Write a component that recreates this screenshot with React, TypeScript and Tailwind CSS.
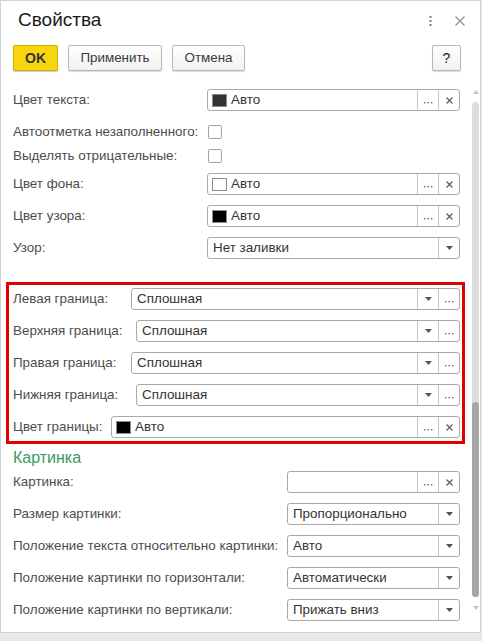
import React from "react";

const FONT = { fontFamily: '"Liberation Sans", Arial, sans-serif' };

function Dots() {
  return (
    <svg width="9" height="2" viewBox="0 0 9 2" className="block">
      <rect x="0" y="0" width="1.4" height="1.4" fill="#6b6b6b" />
      <rect x="3.5" y="0" width="1.4" height="1.4" fill="#6b6b6b" />
      <rect x="7" y="0" width="1.4" height="1.4" fill="#6b6b6b" />
    </svg>
  );
}

function Cross() {
  return (
    <svg width="7" height="7" viewBox="0 0 7 7" className="block">
      <path d="M0.5 0.5 L6.5 6.5 M6.5 0.5 L0.5 6.5" stroke="#555" strokeWidth="1.1" />
    </svg>
  );
}

function Tri() {
  return (
    <svg width="7" height="4" viewBox="0 0 7 4" className="block">
      <path d="M0 0 L7 0 L3.5 4 Z" fill="#555" />
    </svg>
  );
}

function DotsCell() {
  return (
    <div className="w-[21px] border-l border-[#c6c6c6] flex items-end justify-center pb-[6px]">
      <Dots />
    </div>
  );
}
function CrossCell() {
  return (
    <div className="w-[21px] border-l border-[#c6c6c6] flex items-center justify-center">
      <Cross />
    </div>
  );
}
function TriCell() {
  return (
    <div className="w-[21px] border-l border-[#c6c6c6] flex items-center justify-center">
      <Tri />
    </div>
  );
}

function Box({ children }: { children: React.ReactNode }) {
  return (
    <div className="flex-1 h-[22px] flex border border-[#a9a9a9] rounded-[3px] bg-white overflow-hidden">
      {children}
    </div>
  );
}

function ColorField({ swatch, text }: { swatch?: string; text?: string }) {
  return (
    <Box>
      <div className="flex-1 flex items-center pl-[4px] text-[13.4px] text-[#333]">
        {swatch && (
          <span
            className="w-[15px] h-[13px] border border-[#8c8c8c] mr-[4px] inline-block"
            style={{ background: swatch }}
          />
        )}
        {text}
      </div>
      <DotsCell />
      <CrossCell />
    </Box>
  );
}

function SelectField({ text, dots }: { text: string; dots?: boolean }) {
  return (
    <Box>
      <div className="flex-1 flex items-center pl-[5px] text-[13.4px] text-[#333]">{text}</div>
      <TriCell />
      {dots && <DotsCell />}
    </Box>
  );
}

function Row({ label, w, children, className = "" }: { label: string; w: number; children: React.ReactNode; className?: string }) {
  return (
    <div className={"flex items-center h-[22px] " + className}>
      <div className="text-[13.4px] text-[#4d4d4d] shrink-0 whitespace-nowrap" style={{ width: w }}>
        {label}
      </div>
      {children}
    </div>
  );
}

function CheckRow({ label, className = "" }: { label: string; className?: string }) {
  return (
    <div className={"flex items-center h-[24px] " + className}>
      <div className="w-[194px] text-[13.4px] text-[#4d4d4d] whitespace-nowrap">{label}</div>
      <div className="w-[14px] h-[14px] border border-[#a3a3a3] rounded-[2px] bg-white ml-[1px]" />
    </div>
  );
}

function Btn({ children, w, className = "" }: { children: React.ReactNode; w: number; className?: string }) {
  return (
    <div
      className={
        "h-[26px] flex items-center justify-center rounded-[2px] border border-[#b6b6b6] bg-gradient-to-b from-white to-[#f1f1f1] shadow-[0_1px_1px_rgba(0,0,0,0.15)] text-[13.4px] text-[#3a3a3a] " +
        className
      }
      style={{ width: w }}
    >
      {children}
    </div>
  );
}

export default function App() {
  return (
    <div className="w-[482px] h-[641px] bg-[#e8e8e8] overflow-hidden" style={FONT}>
      <div className="w-[481px] h-[633px] bg-white border border-[#d2d2d2] flex flex-col">
        {/* header */}
        <div className="flex items-start pt-[8px] pl-[17px] pr-[15px]">
          <div className="text-[19px] leading-[22px] text-[#1a1a1a]">Свойства</div>
          <div className="ml-auto flex items-center mt-[7px]">
            <svg width="3" height="10" viewBox="0 0 3 10" className="block mr-[23px]">
              <rect x="0.5" y="0" width="2" height="2" fill="#7d7d7d" />
              <rect x="0.5" y="4" width="2" height="2" fill="#7d7d7d" />
              <rect x="0.5" y="8" width="2" height="2" fill="#7d7d7d" />
            </svg>
            <svg width="10" height="10" viewBox="0 0 10 10" className="block">
              <path d="M0.5 0.5 L9.5 9.5 M9.5 0.5 L0.5 9.5" stroke="#8a8a8a" strokeWidth="1.1" />
            </svg>
          </div>
        </div>
        {/* buttons */}
        <div className="flex items-center mt-[14px] pl-[12px] pr-[19px]">
          <div className="w-[45px] h-[26px] flex items-center justify-center rounded-[2px] border border-[#d1ad00] bg-[#f8d60f] shadow-[0_1px_1px_rgba(0,0,0,0.2)] text-[14px] font-bold text-[#333]">
            OK
          </div>
          <Btn w={94} className="ml-[10px]">Применить</Btn>
          <Btn w={73} className="ml-[10px]">Отмена</Btn>
          <Btn w={29} className="ml-auto text-[14px] text-[#222]">?</Btn>
        </div>
        {/* content */}
        <div className="flex flex-1">
          <div className="w-[465px] flex flex-col">
            <div className="ml-[12px] w-[447px] flex flex-col mt-[18px]">
              <Row label="Цвет текста:" w={194}>
                <ColorField swatch="#333333" text="Авто" />
              </Row>
              <CheckRow label="Автоотметка незаполненного:" className="mt-[9px]" />
              <CheckRow label="Выделять отрицательные:" />
              <Row label="Цвет фона:" w={194} className="mt-[5px]">
                <ColorField swatch="#ffffff" text="Авто" />
              </Row>
              <Row label="Цвет узора:" w={194} className="mt-[10px]">
                <ColorField swatch="#000000" text="Авто" />
              </Row>
              <Row label="Узор:" w={194} className="mt-[10px]">
                <SelectField text="Нет заливки" />
              </Row>
            </div>
            <div className="ml-[5px] w-[459px] mt-[23px] border-[3px] border-[#e00000] pt-[3px] pb-[3px] flex flex-col gap-[10px]">
              <div className="ml-[4px] w-[447px] flex flex-col gap-[10px]">
                <Row label="Левая граница:" w={118}>
                  <SelectField text="Сплошная" dots />
                </Row>
                <Row label="Верхняя граница:" w={123}>
                  <SelectField text="Сплошная" dots />
                </Row>
                <Row label="Правая граница:" w={118}>
                  <SelectField text="Сплошная" dots />
                </Row>
                <Row label="Нижняя граница:" w={123}>
                  <SelectField text="Сплошная" dots />
                </Row>
                <Row label="Цвет границы:" w={98}>
                  <ColorField swatch="#000000" text="Авто" />
                </Row>
              </div>
            </div>
            <div className="ml-[12px] w-[447px] flex flex-col">
              <div className="mt-[5px] text-[16px] leading-[18px] text-[#3a9a5e]">Картинка</div>
              <div className="flex flex-col gap-[10px] mt-[4px]">
                <Row label="Картинка:" w={274}>
                  <ColorField />
                </Row>
                <Row label="Размер картинки:" w={274}>
                  <SelectField text="Пропорционально" />
                </Row>
                <Row label="Положение текста относительно картинки:" w={274}>
                  <SelectField text="Авто" />
                </Row>
                <Row label="Положение картинки по горизонтали:" w={274}>
                  <SelectField text="Автоматически" />
                </Row>
                <Row label="Положение картинки по вертикали:" w={274}>
                  <SelectField text="Прижать вниз" />
                </Row>
              </div>
            </div>
          </div>
          {/* scrollbar */}
          <div className="ml-[6px] w-[7px] flex flex-col items-center">
            <svg width="6" height="4" viewBox="0 0 6 4" className="block mt-[19px]">
              <path d="M0 4 L6 4 L3 0 Z" fill="#c4c4c4" />
            </svg>
            <div className="mt-[8px] w-[7px] h-[495px] rounded-full bg-[#dedede] flex flex-col justify-end">
              <div className="w-[7px] h-[195px] rounded-full bg-[#a6a6a6]" />
            </div>
            <svg width="6" height="4" viewBox="0 0 6 4" className="block mt-[9px]">
              <path d="M0 0 L6 0 L3 4 Z" fill="#c4c4c4" />
            </svg>
          </div>
        </div>
      </div>
    </div>
  );
}
